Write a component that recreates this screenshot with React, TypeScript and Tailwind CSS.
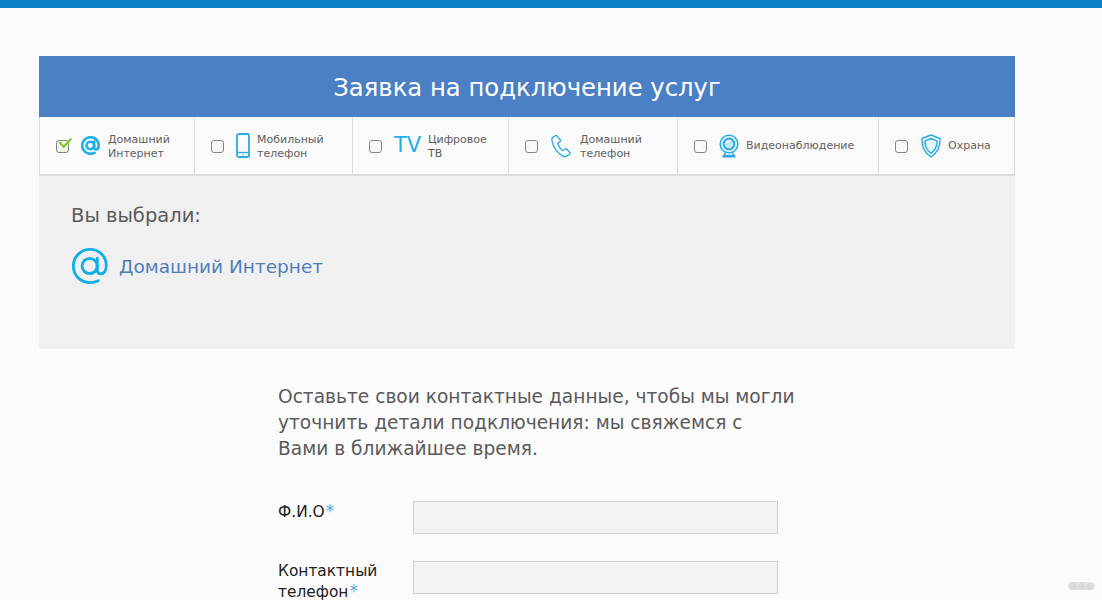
import type { ReactNode } from 'react';

const font = { fontFamily: '"DejaVu Sans", Verdana, sans-serif' };

function AtIcon({ className, weight }: { className: string; weight: number }) {
  return (
    <svg viewBox="0 0 24 24" fill="none" stroke="currentColor" strokeWidth={weight} className={className}>
      <circle cx="11.800" cy="12" r="4.800" />
      <path d="M16.600 7v7.300c0 1.700 1 2.600 2.300 2.600 1.900 0 3.400-2 3.400-5 0-6-4.600-10.400-10.300-10.400C6.200 1.500 1.500 6.200 1.500 12c0 6 4.700 10.500 10.500 10.500 1.900 0 3.700-.4 5.200-1.200" strokeLinecap="round" />
    </svg>
  );
}

function PhoneIcon() {
  return (
    <svg viewBox="0 0 14 25" className="h-[25px] w-[14px] text-[#29abe2]" fill="none" stroke="currentColor">
      <rect x="1" y="1" width="12" height="23" rx="1.800" strokeWidth="1.800" />
      <path d="M1 19.500h12" strokeWidth="1.300" />
      <circle cx="7" cy="21.700" r="0.700" fill="currentColor" stroke="none" />
    </svg>
  );
}

function HandsetIcon() {
  return (
    <svg viewBox="0 0 22 24" className="h-[24px] w-[21px] text-[#29abe2]" fill="none" stroke="currentColor" strokeWidth="1.400" strokeLinejoin="round">
      <path d="M4.500 1.200 1.800 3c-.9.700-1.100 1.700-.9 3 .6 3.700 2.100 7.300 4.500 10.300 2.400 3 4.500 5 7.200 6.400 1.300.7 2.400.7 3.300.2l3.500-2.300c.7-.5.8-1.200.3-1.800l-3-3.400c-.5-.5-1.200-.6-1.800-.2l-2.100 1.300c-.5.300-1 .2-1.400-.2-1.800-1.800-3.200-3.900-4.200-6.300-.2-.6 0-1.100.4-1.400l1.800-1.200c.6-.4.8-1.100.5-1.700L6.300 1.700c-.4-.7-1.100-.9-1.800-.5Z" />
    </svg>
  );
}

function CameraIcon() {
  return (
    <svg viewBox="0 0 20 24" className="h-[24px] w-[20px] text-[#29abe2]" fill="none" stroke="currentColor">
      <circle cx="10" cy="10" r="8.800" strokeWidth="1.600" />
      <circle cx="10" cy="10" r="5.400" strokeWidth="2" fill="#bfe6f5" />
      <path d="M7 9.500a3.400 3.400 0 0 1 4-2.500" strokeWidth="1.200" stroke="#ffffff" />
      <path d="M6.500 18.500 4.800 21.500h10.400l-1.700-3" strokeWidth="1.500" />
      <path d="M3.500 22.700h13" strokeWidth="1.700" />
    </svg>
  );
}

function ShieldIcon() {
  return (
    <svg viewBox="0 0 20 24" className="h-[24px] w-[20px] text-[#29abe2]" fill="none" stroke="currentColor" strokeLinejoin="round">
      <path d="M10 1 19 4.500c.4 7.500-2 14-9 18.500C3 18.500.6 12 1 4.500L10 1Z" strokeWidth="1.400" />
      <path d="M10 4.500 16 6.800c.2 5-1.400 9.500-6 12.600-4.600-3.100-6.200-7.600-6-12.600L10 4.500Z" strokeWidth="1.400" fill="#e4f4fb" />
    </svg>
  );
}

function Box({ checked }: { checked?: boolean }) {
  return (
    <span className={`relative mt-[2px] block h-[13px] w-[13px] shrink-0 rounded-[3px] border-[1.5px] border-[#858585] ${checked ? 'bg-[#eef6e2]' : 'bg-[#f8f8f8]'}`}>
      {checked && (
        <svg viewBox="0 0 18 14" className="absolute -top-[4px] -left-[1px] h-[13px] w-[17px]" fill="none" stroke="#8cc63f" strokeWidth="2.400">
          <path d="M3.500 5.500 8 10.500 16.500 1.500" />
        </svg>
      )}
    </span>
  );
}

const tabs: { width: string; gap: string; ml: string; icon: ReactNode; label: ReactNode; checked?: boolean }[] = [
  { width: 'w-[155px]', gap: 'gap-[8px]', ml: 'ml-[12px]', checked: true, icon: <AtIcon weight={3.300} className="h-[19px] w-[19px] text-[#1fb0e6]" />, label: <>Домашний<br />Интернет</> },
  { width: 'w-[158px]', gap: 'gap-[7px]', ml: 'ml-[12px]', icon: <PhoneIcon />, label: <>Мобильный<br />телефон</> },
  { width: 'w-[156px]', gap: 'gap-[7px]', ml: 'ml-[12px]', icon: <span className="w-[27px] text-[21px] leading-none text-[#1fb0e6]">TV</span>, label: <>Цифровое<br />ТВ</> },
  { width: 'w-[169px]', gap: 'gap-[8px]', ml: 'ml-[13px]', icon: <HandsetIcon />, label: <>Домашний<br />телефон</> },
  { width: 'w-[201px]', gap: 'gap-[7px]', ml: 'ml-[12px]', icon: <CameraIcon />, label: 'Видеонаблюдение' },
  { width: 'w-[137px]', gap: 'gap-[7px]', ml: 'ml-[13px]', icon: <ShieldIcon />, label: 'Охрана' },
];

export default function App() {
  return (
    <div className="relative h-[600px] overflow-hidden bg-[#fbfbfb]" style={font}>
      <div className="h-[8px] bg-[#0a80c4]" />

      <div className="mt-[48px] ml-[39px] w-[976px]">
        <h1 className="flex h-[61px] items-center justify-center bg-[#4c80c4] pt-[3px] text-[24.300px] text-white">
          Заявка на подключение услуг
        </h1>

        <div className="flex h-[59px] border-x border-b-2 border-[#dcdcdc] bg-[#fafafa]">
          {tabs.map((t, i) => (
            <div key={i} className={`flex shrink-0 items-center pl-[16px] ${t.width} border-r border-[#dcdcdc] last:border-r-0`}>
              <Box checked={t.checked} />
              <div className={`flex items-center ${t.ml} ${t.gap}`}>
                {t.icon}
                <span className={`${typeof t.label === 'string' ? 'pt-[1px]' : 'pt-[3px]'} text-[11px] leading-[14px] text-[#5f5f5f]`}>{t.label}</span>
              </div>
            </div>
          ))}
        </div>

        <div className="h-[173px] bg-[#f0f0f0] pt-[28px] pl-[32px]">
          <div className="text-[19.500px] leading-[24px] text-[#5a5a5a]">Вы выбрали:</div>
          <div className="mt-[19px] flex items-center gap-[10px]">
            <AtIcon weight={1.800} className="h-[38px] w-[38px] text-[#12aee8]" />
            <span className="pt-[1px] text-[18.500px] text-[#4f7dbd]">Домашний Интернет</span>
          </div>
        </div>
      </div>

      <div className="ml-[278px] w-[520px]">
        <p className="mt-[35px] text-[18.600px] leading-[26px] text-[#5a5a5a]">
          Оставьте свои контактные данные, чтобы мы могли<br />
          уточнить детали подключения: мы свяжемся с<br />
          Вами в ближайшее время.
        </p>

        <div className="mt-[39px] flex">
          <label className="w-[135px] text-[15.400px] leading-[20px] text-[#222222]">
            Ф.И.О<span className="ml-[1px] text-[17px] text-[#5fa8d3]">*</span>
          </label>
          <div className="h-[33px] w-[365px] border border-[#cfcfcf] bg-[#f2f3f5]" />
        </div>

        <div className="mt-[27px] flex">
          <label className="w-[135px] text-[15.400px] leading-[20px] text-[#222222]">
            Контактный<br />телефон<span className="ml-[1px] text-[17px] text-[#5fa8d3]">*</span>
          </label>
          <div className="h-[33px] w-[365px] border border-[#cfcfcf] bg-[#f2f3f5]" />
        </div>
      </div>

      <div className="absolute top-[582px] left-[1068px] flex h-[8px] w-[27px] items-center justify-center gap-[1px] rounded-[4px] bg-[#e3e3e3]">
        <span className="h-[7px] w-[7px] rounded-full bg-[#d8d8d8]" />
        <span className="h-[7px] w-[7px] rounded-full bg-[#d8d8d8]" />
        <span className="h-[7px] w-[7px] rounded-full bg-[#d8d8d8]" />
      </div>
    </div>
  );
}
